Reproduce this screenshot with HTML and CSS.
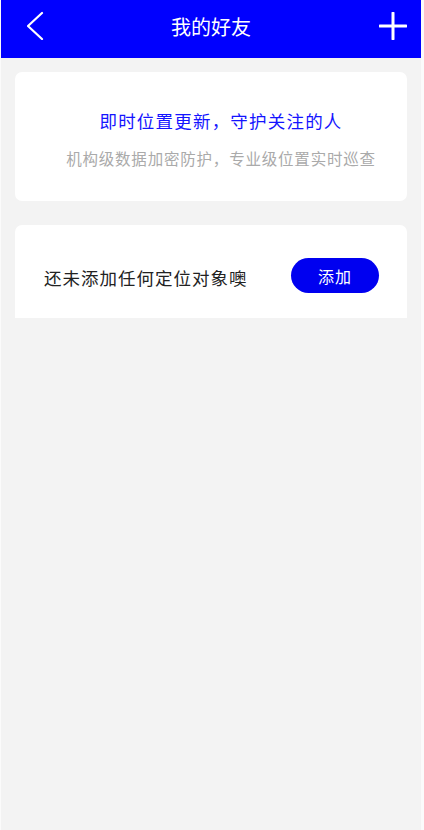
FILE: index.html
```html
<!DOCTYPE html>
<html lang="zh">
<head>
<meta charset="utf-8">
<link rel="stylesheet" href="styles.css">
</head>
<body>
<div class="app">
  <header class="bar">
    <svg class="icon back" width="30" height="40" viewBox="0 0 30 40"><polyline points="15,13 1,26 15,39" fill="none" stroke="#fff" stroke-width="2.2" stroke-linecap="round" stroke-linejoin="round"/></svg>
    <h1 class="title">我的好友</h1>
    <svg class="icon plus" width="28" height="28" viewBox="0 0 28 28"><path d="M1 14H27M14 1V27" fill="none" stroke="#fff" stroke-width="3" stroke-linecap="round"/></svg>
  </header>
  <main class="content">
    <section class="card intro">
      <p class="headline">即时位置更新，守护关注的人</p>
      <p class="sub">机构级数据加密防护，专业级位置实时巡查</p>
    </section>
    <section class="card empty">
      <span class="empty-text">还未添加任何定位对象噢</span>
      <button class="add-btn">添加</button>
    </section>
  </main>
</div>
</body>
</html>
```

FILE: styles.css
```css
html, body {
  margin: 0;
  padding: 0;
  height: 100%;
}
body {
  background: #fbfbfb;
  font-family: "Noto Sans CJK SC", "Noto Sans", sans-serif;
}
.app {
  width: 420px;
  margin-left: 1px;
  min-height: 830px;
  background: #f3f3f3;
}
.bar {
  position: relative;
  height: 58px;
  background: #0000ff;
  display: flex;
  align-items: center;
  justify-content: center;
}
.title {
  margin: 0;
  color: #fff;
  font-size: 20px;
  font-weight: 400;
  line-height: 1;
  margin-top: -5px;
}
.icon {
  position: absolute;
}
.back {
  left: 26px;
  top: 0;
}
.plus {
  left: 378px;
  top: 12px;
}
.content {
  padding: 14px 14px 0;
  display: flex;
  flex-direction: column;
  gap: 24px;
}
.card {
  background: #fff;
  border-radius: 7px;
}
.intro {
  height: 129px;
  box-sizing: border-box;
  padding-top: 4px;
  display: flex;
  flex-direction: column;
  align-items: center;
  justify-content: center;
}
.headline {
  margin: 0;
  color: #1414ff;
  font-size: 17.5px;
  line-height: 24px;
  letter-spacing: 1.2px;
  padding-left: 20px;
}
.sub {
  margin: 14px 0 0;
  color: #aaaaaa;
  font-size: 15.5px;
  line-height: 22px;
  letter-spacing: 0.8px;
  padding-left: 20px;
}
.empty {
  height: 93px;
  border-radius: 7px 7px 0 0;
  display: flex;
  align-items: center;
  justify-content: space-between;
  padding: 8px 28px 0 29px;
  box-sizing: border-box;
}
.empty-text {
  color: #222;
  font-size: 17.5px;
  letter-spacing: 1px;
  margin-top: 3px;
}
.add-btn {
  width: 88px;
  height: 35px;
  border: none;
  border-radius: 18px;
  background: #0000f0;
  color: #fff;
  font-family: inherit;
  font-size: 16px;
  letter-spacing: 1px;
  padding: 0;
}
```
